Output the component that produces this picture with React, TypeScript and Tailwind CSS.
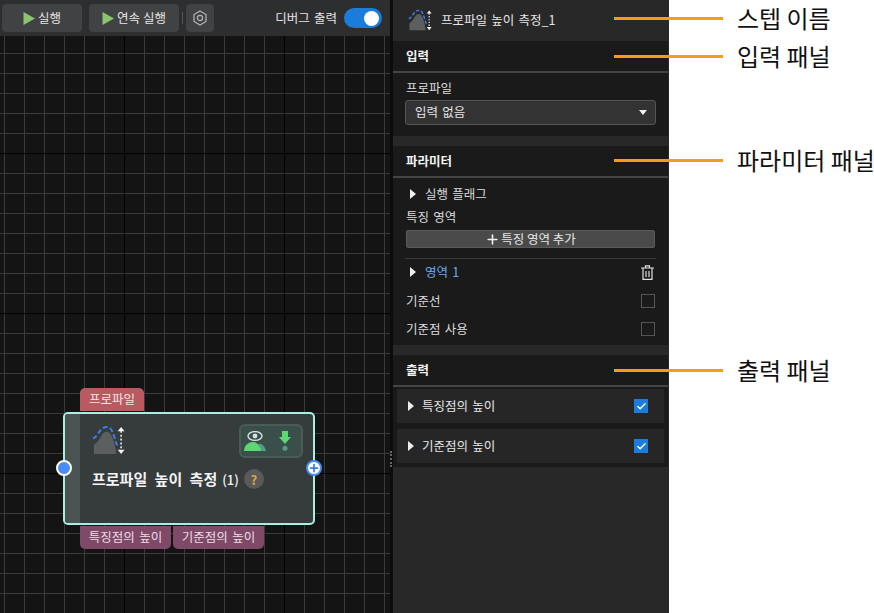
import React from 'react'
import { Plus, Check } from 'lucide-react'

const font = "font-['Noto_Sans_CJK_KR','Noto_Sans',sans-serif]"

function PlayIcon() {
  return (
    <svg width="12" height="13" viewBox="0 0 12 13">
      <path d="M0.5 0 L12 6.5 L0.5 13 Z" fill="#8cc56e" />
    </svg>
  )
}

function Caret() {
  return (
    <svg width="6" height="10" viewBox="0 0 6 10" className="shrink-0">
      <path d="M0 0 L6 5 L0 10 Z" fill="#eeeeee" />
    </svg>
  )
}

function TrashIcon() {
  return (
    <svg width="13" height="15" viewBox="0 0 13 15" fill="none" stroke="#e0e0e0" strokeWidth="1.2" className="ml-auto mr-px">
      <path d="M0 3 H13 M4.5 3 V0.8 H8.5 V3" />
      <path d="M2 3 V14.4 H11 V3" />
      <path d="M5 6 V12 M8 6 V12" />
    </svg>
  )
}

function ProfileIcon({ size }: { size: number }) {
  return (
    <svg width={size} height={size} viewBox="0 0 34 34">
      <path d="M2 30 V20 C5 19 7 15 9 12 C11 8 13 7 15 7 C18 7 20 10 21 13 C23 18 24 22 25 30 Z" fill="#5c5f60" />
      <path d="M1 14 C4 13 7 8 9 5 C11 3 13 2 15 2 C18 2 20 4 21 7 C23 11 24 17 26 21" fill="none" stroke="#3f7fe8" strokeWidth="2" strokeDasharray="5 2.5" />
      <path d="M30 6 V26" stroke="#f2f2f2" strokeWidth="1.6" strokeDasharray="2 2" />
      <path d="M30 2 L33.5 6.5 H26.5 Z M30 30 L33.5 25.5 H26.5 Z" fill="#f2f2f2" />
    </svg>
  )
}

function PanelHeader({ title }: { title: string }) {
  return (
    <div className="h-[32px] border-b-2 border-[#444444] pl-[13px] flex items-center text-[12.5px] font-bold text-[#f2f2f2]">
      {title}
    </div>
  )
}

function OutputRow({ label }: { label: string }) {
  return (
    <div className="h-[34px] bg-[#262626] pl-[11px] pr-[16px] flex items-center">
      <Caret />
      <span className="ml-[8px] text-[12.5px] text-[#e6e6e6]">{label}</span>
      <span className="ml-auto w-[14px] h-[14px] bg-[#1c7cdc] flex items-center justify-center">
        <Check size={11} color="#ffffff" strokeWidth={3} />
      </span>
    </div>
  )
}

function Annotation({ top, label }: { top: number; label: string }) {
  return (
    <div className="absolute left-[614px] flex items-center h-[36px] [word-spacing:0]" style={{ top }}>
      <div className="w-[109px] h-[3px] bg-[#f39c1f]" />
      <span className="ml-[14px] text-[24px] leading-[36px] text-[#111111] whitespace-nowrap">{label}</span>
    </div>
  )
}

export default function App() {
  return (
    <div className={`relative w-[874px] h-[613px] overflow-hidden flex bg-white [word-spacing:1.5px] ${font}`}>
      {/* editor */}
      <div className="w-[390px] h-full flex flex-col shrink-0">
        <div className="h-[36px] bg-[#2d2e30] flex items-center pl-[2px] pr-[8px] shrink-0">
          <button className="w-[80px] h-[28px] bg-[#414243] rounded-[4px] flex items-center justify-center gap-[3px] text-[12.5px] text-[#e6e6e6]">
            <PlayIcon />실행
          </button>
          <button className="ml-[7px] w-[90px] h-[28px] bg-[#414243] rounded-[4px] flex items-center justify-center gap-[3px] text-[12.5px] text-[#e6e6e6]">
            <PlayIcon />연속 실행
          </button>
          <div className="ml-[3px] w-px h-[12px] bg-[#555555]" />
          <button className="ml-[3px] w-[28px] h-[28px] bg-[#414243] rounded-[4px] flex items-center justify-center">
            <svg width="14" height="16" viewBox="0 0 14 16" fill="none" stroke="#b5b5b5" strokeWidth="1.2">
              <path d="M7 1 L13 4.5 V11.5 L7 15 L1 11.5 V4.5 Z" />
              <circle cx="7" cy="8" r="2.6" />
            </svg>
          </button>
          <span className="ml-auto text-[12.5px] text-[#e6e6e6]">디버그 출력</span>
          <div className="ml-[7px] w-[38px] h-[20px] rounded-full bg-[#1c7cdc] flex items-center justify-end pr-[3px]">
            <div className="w-[15px] h-[15px] rounded-full bg-white" />
          </div>
        </div>

        <div className="relative flex-1 bg-[#141414] [background-image:linear-gradient(to_right,#000000_1px,transparent_1px),linear-gradient(to_bottom,#000000_1px,transparent_1px),linear-gradient(to_right,#3a3a3a_1px,transparent_1px),linear-gradient(to_bottom,#3a3a3a_1px,transparent_1px)] [background-size:160px_160px,160px_160px,20px_20px,20px_20px] [background-position:124px_0,0_117px,4px_0,0_17px]">
          {/* step node */}
          <div className="absolute left-[63px] top-[352px] w-[252px]">
            <div className="ml-[17px] w-[64px] h-[23px] bg-[#b85a5f] rounded-t-[5px] flex items-center justify-center text-[12.5px] text-[#f2e6e6]">
              프로파일
            </div>
            <div className="relative mt-[1px] h-[113px] border-2 border-[#a8eee2] rounded-[5px] bg-[#363b3c] flex overflow-visible">
              <div className="w-[15px] bg-[#4a5553] rounded-l-[3px] shrink-0" />
              <div className="flex-1 pl-[12px] pt-[11px] pr-[10px]">
                <div className="flex items-start justify-between">
                  <ProfileIcon size={33} />
                  <div className="w-[64px] h-[34px] -mt-[1px] rounded-[6px] bg-[#3a4f4a] border-2 border-[#4a5c57] flex items-center pl-[3px] gap-[13px]">
                    <svg width="22" height="20" viewBox="0 0 22 20">
                      <ellipse cx="11" cy="5" rx="7" ry="4.4" fill="none" stroke="#d5e2de" strokeWidth="1.4" />
                      <circle cx="11" cy="5" r="2.4" fill="#d5e2de" />
                      <path d="M14 13 C18 12 21 16 22 20 H16 Z" fill="#5a9a8c" />
                      <path d="M0 20 C0 14 5 11 9 11 C13 11 16 15 17 20 Z" fill="#5cd873" />
                    </svg>
                    <svg width="12" height="20" viewBox="0 0 12 20">
                      <path d="M3 0 H9 V6 H12 L6 13 L0 6 H3 Z" fill="#5cd873" />
                      <circle cx="6" cy="17.3" r="2.5" fill="#5a9a8c" />
                    </svg>
                  </div>
                </div>
                <div className="mt-[10px] flex items-center">
                  <span className="text-[15px] font-bold [word-spacing:4px] text-[#f4f4f4] whitespace-nowrap">프로파일 높이 측정</span>
                  <span className="ml-[5px] text-[13px] font-medium text-[#f0f0f0]">(1)</span>
                  <span className="ml-[5px] w-[20px] h-[20px] rounded-full bg-[#5a5a5a] flex items-center justify-center text-[13px] font-bold text-[#d9a441]">?</span>
                </div>
              </div>
              <div className="absolute -left-[9px] top-[46px] w-[16px] h-[16px] rounded-full bg-[#4a8cf5] border-2 border-white" />
              <div className="absolute -right-[9px] top-[46px] w-[16px] h-[16px] rounded-full bg-white border-2 border-[#4a8cf5] flex items-center justify-center">
                <Plus size={12} color="#3a7ae8" strokeWidth={3.5} />
              </div>
            </div>
            <div className="ml-[17px] mt-[1px] flex gap-[2px]">
              <div className="w-[91px] h-[23px] bg-[#7f4a68] rounded-b-[5px] flex items-center justify-center text-[12.5px] text-[#eadde5]">특징점의 높이</div>
              <div className="w-[91px] h-[23px] bg-[#7f4a68] rounded-b-[5px] flex items-center justify-center text-[12.5px] text-[#eadde5]">기준점의 높이</div>
            </div>
          </div>
        </div>
      </div>

      <div className="w-[3px] h-full bg-[#0c0c0c] shrink-0" />
      <div className="absolute left-[390px] top-[451px] h-[16px] border-l-2 border-dotted border-[#666666]" />

      {/* settings panel */}
      <div className="w-[276px] h-full bg-[#282828] shrink-0 flex flex-col">
        <div className="h-[41px] flex items-center pl-[15px] shrink-0">
          <ProfileIcon size={24} />
          <span className="ml-[9px] text-[12.5px] text-[#e6e6e6]">프로파일 높이 측정_1</span>
        </div>

        <div className="w-[275px] h-[95px] bg-[#1a1a1a] shrink-0">
          <PanelHeader title="입력" />
          <div className="pl-[12px]">
            <div className="mt-[6px] pl-px h-[18px] leading-[18px] text-[12.5px] text-[#dcdcdc]">프로파일</div>
            <div className="mt-[3px] w-[251px] h-[25px] bg-[#333333] border border-[#555555] rounded-[3px] flex items-center pl-[9px] pr-[8px] text-[12.5px] text-[#e6e6e6]">
              입력 없음
              <svg width="8" height="5" viewBox="0 0 8 5" className="ml-auto">
                <path d="M0 0 H8 L4 5 Z" fill="#f0f0f0" />
              </svg>
            </div>
          </div>
        </div>

        <div className="mt-[10px] w-[275px] h-[199px] bg-[#1a1a1a] shrink-0">
          <PanelHeader title="파라미터" />
          <div className="pl-[13px] pr-[13px]">
            <div className="mt-[7px] h-[18px] flex items-center pl-[4px] text-[12.5px] text-[#dcdcdc]">
              <Caret />
              <span className="ml-[9px]">실행 플래그</span>
            </div>
            <div className="mt-[5px] h-[18px] leading-[18px] text-[12.5px] text-[#dcdcdc]">특징 영역</div>
            <button className="mt-[4px] w-full h-[18px] bg-[#4a4a4a] border border-[#5a5a5a] rounded-[2px] flex items-center justify-center text-[12.5px] text-[#e6e6e6]">
              <Plus size={15} color="#f0f0f0" strokeWidth={2.5} />
              <span className="ml-[1px]">특징 영역 추가</span>
            </button>
            <div className="mt-[10px] -ml-px h-px w-[251px] bg-[#3a3a3a]" />
            <div className="mt-[4px] h-[18px] flex items-center pl-[4px] text-[12.5px] text-[#6aa9e9]">
              <Caret />
              <span className="ml-[9px]">영역 1</span>
              <TrashIcon />
            </div>
            <div className="mt-[11px] h-[18px] flex items-center justify-between text-[12.5px] text-[#dcdcdc]">
              기준선
              <span className="w-[14px] h-[14px] border border-[#555555]" />
            </div>
            <div className="mt-[10px] h-[18px] flex items-center justify-between text-[12.5px] text-[#dcdcdc]">
              기준점 사용
              <span className="w-[14px] h-[14px] border border-[#555555]" />
            </div>
          </div>
        </div>

        <div className="mt-[10px] w-[275px] h-[112px] bg-[#1a1a1a] shrink-0">
          <PanelHeader title="출력" />
          <div className="mt-[2px] px-[4px] flex flex-col gap-[6px]">
            <OutputRow label="특징점의 높이" />
            <OutputRow label="기준점의 높이" />
          </div>
        </div>
      </div>

      {/* callouts */}
      <Annotation top={0} label="스텝 이름" />
      <Annotation top={38} label="입력 패널" />
      <Annotation top={142} label="파라미터 패널" />
      <Annotation top={352} label="출력 패널" />
    </div>
  )
}
